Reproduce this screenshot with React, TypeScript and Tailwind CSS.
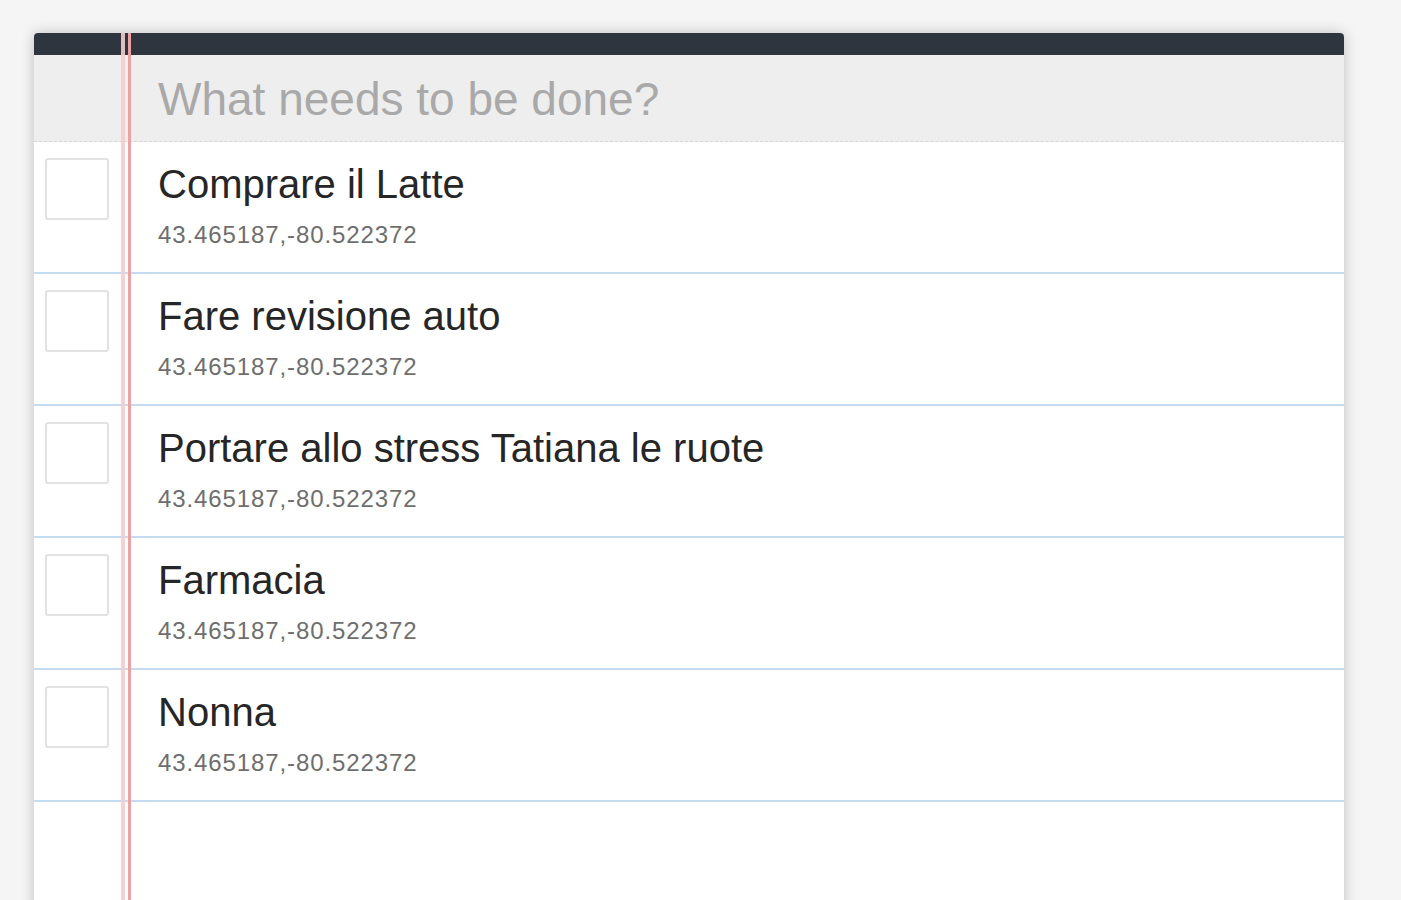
import React from "react";

const todos = [
  "Comprare il Latte",
  "Fare revisione auto",
  "Portare allo stress Tatiana le ruote",
  "Farmacia",
  "Nonna",
];

export default function App() {
  return (
    <div
      className="min-h-screen bg-[#f5f5f5] pt-[33px] pl-[34px] overflow-hidden"
      style={{ fontFamily: '"Liberation Sans", Arial, sans-serif' }}
    >
      <div className="relative w-[1310px] bg-white shadow-[0_0_14px_rgba(0,0,0,0.22)] rounded-t-[4px]">
        <div className="h-[22px] bg-[#2e353e] rounded-t-[4px]" />
        <div className="h-[87px] bg-[#eeeeee] border-b border-dashed border-[#d6d6d6] flex items-center pt-[3px]">
          <input
            className="ml-[124px] w-[1100px] bg-transparent outline-none text-[46px] text-[#333] placeholder:text-[#a9a9a9]"
            placeholder="What needs to be done?"
          />
        </div>
        {todos.map((t) => (
          <div
            key={t}
            className="h-[132px] border-b-2 border-[#c4dcf2] flex items-start"
          >
            <div className="ml-[11px] mt-[16px] w-[64px] h-[62px] border-2 border-[#e2e2e2] rounded-[3px] bg-white shrink-0" />
            <div className="ml-[49px] pt-[19px]">
              <div className="text-[40px] leading-[46px] text-[#262626]">{t}</div>
              <div className="mt-[15px] text-[24px] leading-[26px] tracking-[0.9px] text-[#6e6e6e]">
                43.465187,-80.522372
              </div>
            </div>
          </div>
        ))}
        <div className="h-[140px]" />
        <div className="absolute top-0 bottom-0 left-[87px] w-[4px] bg-[#f6cccc] opacity-90" />
        <div className="absolute top-0 bottom-0 left-[94px] w-[3px] bg-[#eba2a2]" />
      </div>
    </div>
  );
}
